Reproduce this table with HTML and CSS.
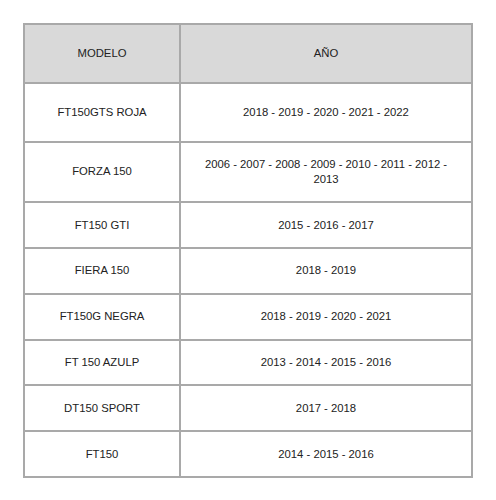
FILE: index.html
```html
<!DOCTYPE html>
<html lang="es">
<head>
<meta charset="utf-8">
<link rel="stylesheet" href="styles.css">
</head>
<body>
<table class="models">
  <thead>
    <tr><th class="c1">MODELO</th><th class="c2">AÑO</th></tr>
  </thead>
  <tbody>
    <tr class="tall"><td>FT150GTS ROJA</td><td>2018 - 2019 - 2020 - 2021 - 2022</td></tr>
    <tr><td>FORZA 150</td><td>2006 - 2007 - 2008 - 2009 - 2010 - 2011 - 2012 - 2013</td></tr>
    <tr><td>FT150 GTI</td><td>2015 - 2016 - 2017</td></tr>
    <tr><td>FIERA 150</td><td>2018 - 2019</td></tr>
    <tr><td>FT150G NEGRA</td><td>2018 - 2019 - 2020 - 2021</td></tr>
    <tr><td>FT 150 AZULP</td><td>2013 - 2014 - 2015 - 2016</td></tr>
    <tr><td>DT150 SPORT</td><td>2017 - 2018</td></tr>
    <tr><td>FT150</td><td>2014 - 2015 - 2016</td></tr>
  </tbody>
</table>
</body>
</html>
```
FILE: styles.css
```css
html, body {
  margin: 0;
  padding: 0;
  background: #ffffff;
}
body {
  padding: 23px 0 0 23px;
  font-family: "Liberation Sans", Arial, sans-serif;
  font-size: 11.3px;
  line-height: 15px;
  color: #222222;
}
.models {
  table-layout: fixed;
  width: 450px;
  border-collapse: separate;
  border-spacing: 0;
  border-top: 2px solid #a9a9a9;
  border-left: 2px solid #a9a9a9;
}
.models th,
.models td {
  box-sizing: border-box;
  border-right: 2px solid #a9a9a9;
  border-bottom: 2px solid #a9a9a9;
  text-align: center;
  vertical-align: middle;
  font-weight: normal;
  padding: 14.4px 15px;
}
.models th {
  background: #d9d9d9;
  padding-top: 21px;
  padding-bottom: 21px;
}
.models .c1 {
  width: 156px;
}
.models .tall td {
  padding-top: 20.75px;
  padding-bottom: 20.75px;
}
```
